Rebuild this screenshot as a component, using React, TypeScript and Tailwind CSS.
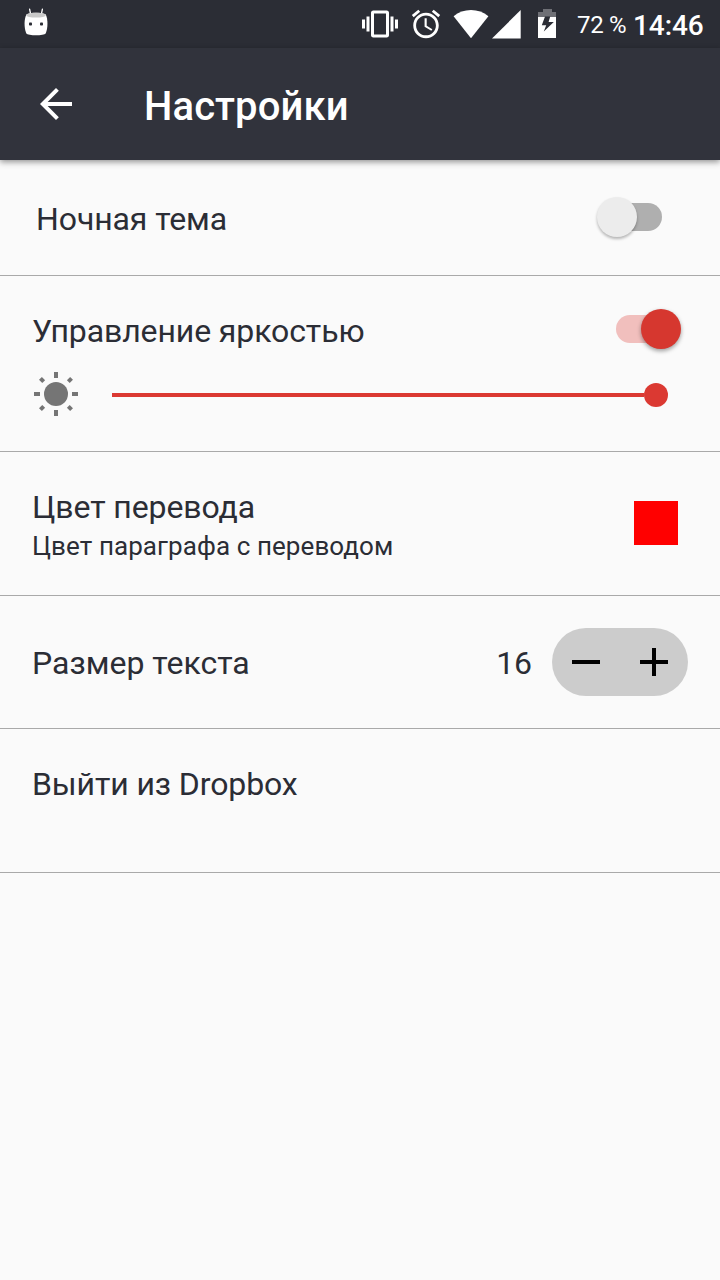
import React from "react";

function StatusBar() {
  return (
    <div className="flex h-12 items-start bg-[#2b2d35] text-white">
      <svg className="ml-[22px] h-12 w-7" viewBox="22 0 28 48">
        <path d="M29.6 9.2L30.6 14M42.4 9.2L41.4 14" stroke="#fff" strokeWidth="1.3" strokeLinecap="round" />
        <path d="M26.4 14.5C29 12.3 43 12.3 45.8 14.5C48 19 48 28 45.8 33.2C44 36 28 36 26.2 33.2C24 28 24 19 26.4 14.5Z" fill="#fff" />
        <ellipse cx="36" cy="15.2" rx="9.8" ry="2.4" fill="#c9c9c9" />
        <rect x="29" y="22.5" width="3" height="3" rx="0.8" fill="#2b2d35" />
        <rect x="40" y="22.5" width="3" height="3" rx="0.8" fill="#2b2d35" />
      </svg>
      <div className="flex-1" />
      <svg className="mt-1.5 size-9" viewBox="0 0 24 24" fill="#fff">
        <path d="M0 15h2V9H0v6zm3 2h2V7H3v10zm19-8v6h2V9h-2zm-3 8h2V7h-2v10zM16.5 3h-9C6.67 3 6 3.67 6 4.5v15c0 .83.67 1.5 1.5 1.5h9c.83 0 1.5-.67 1.5-1.5v-15c0-.83-.67-1.5-1.5-1.5zM16 19H8V5h8v14z" />
      </svg>
      <svg className="mt-[7px] ml-[11px] size-[34px]" viewBox="0 0 24 24" fill="#fff">
        <path d="M22 5.72l-4.6-3.86-1.29 1.53 4.6 3.86L22 5.72zM7.88 3.39L6.6 1.86 2 5.71l1.29 1.53 4.59-3.85zM12.5 8H11v6l4.75 2.85.75-1.23-4-2.37V8zM12 4c-4.97 0-9 4.03-9 9s4.02 9 9 9c4.97 0 9-4.03 9-9s-4.03-9-9-9zm0 16c-3.87 0-7-3.13-7-7s3.13-7 7-7 7 3.13 7 7-3.13 7-7 7z" />
      </svg>
      <svg className="ml-2.5 h-12 w-9" viewBox="453 0 36 48">
        <path d="M453.6 16.2C463 8 479 8 488.4 16.2L471 38.2Z" fill="#fff" />
      </svg>
      <svg className="ml-0.5 h-12 w-[31px]" viewBox="491 0 31 48">
        <path d="M520.7 10V38.5H492Z" fill="#fff" />
      </svg>
      <svg className="ml-4 h-12 w-[18px]" viewBox="538 0 18 48">
        <path d="M543 9h9v3h4v5h-18v-5h5z" fill="#6f7076" />
        <path d="M538 17h18v21h-18z" fill="#fff" />
        <path d="M545 16.5H550.2L548.6 22H553.8L543.8 31.5L546.2 25.3H541.8Z" fill="#2b2d35" />
      </svg>
      <span className="mt-[11px] ml-[21px] w-14 whitespace-nowrap text-2xl leading-7 tracking-[-0.3px]">72 %</span>
      <span className="mt-[9px] w-[87px] whitespace-nowrap text-[28px] font-medium leading-[34px]">14:46</span>
    </div>
  );
}

function AppBar() {
  return (
    <header className="relative flex h-28 items-center bg-[#31333c] pl-8 text-white shadow-[0_2px_6px_rgba(0,0,0,0.42)]">
      <button aria-label="Назад" className="size-12">
        <svg className="size-12" viewBox="0 0 24 24" fill="#fff">
          <path d="M20 11H7.83l5.59-5.59L12 4l-8 8 8 8 1.41-1.41L7.83 13H20v-2z" />
        </svg>
      </button>
      <h1 className="mt-1.5 ml-16 text-[40px] font-medium leading-[48px] tracking-[0.1px]">Настройки</h1>
    </header>
  );
}

function Switch({ on }: { on: boolean }) {
  return (
    <div role="switch" aria-checked={on} className={on ? "relative flex h-10 w-[65px] items-center justify-end" : "relative flex h-10 w-[65px] items-center"}>
      <div className={on ? "absolute left-0 h-7 w-[55px] rounded-full bg-[#f1bfbd]" : "absolute right-0 h-7 w-[55px] rounded-full bg-[#afafaf]"} />
      <div className={on ? "relative size-10 rounded-full bg-[#d6372f] shadow-[0_2px_4px_rgba(0,0,0,0.38)]" : "relative size-10 rounded-full bg-[#ececec] shadow-[0_2px_3px_rgba(0,0,0,0.28)]"} />
    </div>
  );
}

const diagonals = [45, 135, 225, 315];
const straights = [0, 90, 180, 270];

function Sun() {
  return (
    <svg className="size-12" viewBox="-24 -24 48 48" fill="#757575">
      <circle r="12" />
      {straights.map((a) => (
        <rect key={a} x="-2" y="-22" width="4" height="6" transform={`rotate(${a})`} />
      ))}
      {diagonals.map((a) => (
        <rect key={a} x="-2" y="-22" width="4" height="4.6" transform={`rotate(${a})`} />
      ))}
    </svg>
  );
}

export default function App() {
  return (
    <div className="flex h-[1280px] w-[720px] flex-col overflow-hidden bg-[#fafafa] font-['Roboto',sans-serif] text-[32px] leading-[38px] tracking-[-0.1px] text-[#2b2d35]">
      <StatusBar />
      <AppBar />
      <section className="flex h-[116px] items-start justify-between border-b border-[#a9a9a9] pr-[58px] pl-9">
        <span className="mt-10">Ночная тема</span>
        <div className="mt-[37px]"><Switch on={false} /></div>
      </section>
      <section className="h-44 border-b border-[#a9a9a9]">
        <div className="flex h-[94px] items-start justify-between pr-[39px] pl-8">
          <span className="mt-9">Управление яркостью</span>
          <div className="mt-[33px]"><Switch on /></div>
        </div>
        <div className="flex h-12 items-center pl-8">
          <Sun />
          <div className="mt-0.5 ml-8 h-1 w-[532px] bg-[#db3932]" />
          <div className="mt-0.5 size-6 rounded-full bg-[#db3932]" />
        </div>
      </section>
      <section className="flex h-36 items-start justify-between border-b border-[#a9a9a9] pr-[42px] pl-8">
        <div className="mt-9 flex flex-col">
          <span>Цвет перевода</span>
          <span className="mt-[3px] text-[26px] leading-[34px] tracking-[0.08px]">Цвет параграфа с переводом</span>
        </div>
        <div className="mt-[49px] size-11 bg-[#ff0000]" />
      </section>
      <section className="flex h-[133px] items-start border-b border-[#a9a9a9] pr-8 pl-8">
        <span className="mt-12 flex-1 tracking-normal">Размер текста</span>
        <span className="mt-12 mr-5">16</span>
        <div className="mt-8 flex h-[68px] w-[136px] items-center rounded-full bg-[#cccccc]">
          <svg className="size-[68px]" viewBox="0 0 68 68">
            <path d="M20 32h28v4H20z" />
          </svg>
          <svg className="size-[68px]" viewBox="0 0 68 68">
            <path d="M20 32h12V20h4v12h12v4H36v12h-4V36H20z" />
          </svg>
        </div>
      </section>
      <section className="h-36 border-b border-[#a9a9a9] pt-9 pl-8">Выйти из Dropbox</section>
    </div>
  );
}
